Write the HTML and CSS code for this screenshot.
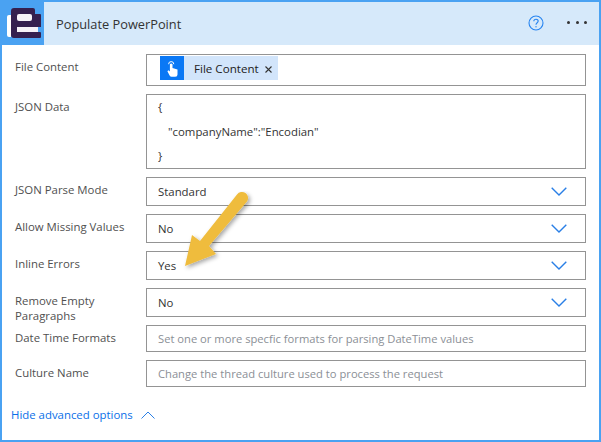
FILE: index.html
```html
<!DOCTYPE html>
<html lang="en">
<head>
<meta charset="utf-8">
<title>Populate PowerPoint</title>
<link rel="stylesheet" href="styles.css">
</head>
<body>
<div class="card">
  <header class="head">
    <div class="logo">
      <svg width="34" height="30" viewBox="0 0 34 30">
        <path d="M0 9Q0 7 2 7H4V29H2Q0 29 0 27Z" fill="#fff"/>
        <path d="M4 3Q4 0 7 0H26Q28 0 28 2V6H33Q34 6 34 7V19H31V24H33Q34 24 34 25V29Q34 30 33 30H7Q4 30 4 27Z" fill="#35204f"/>
        <rect x="10" y="6" width="15" height="7" rx="2" fill="#f6f3f8"/>
        <rect x="10" y="19" width="21" height="5" fill="#f6f3f8"/>
      </svg>
    </div>
    <div class="title">Populate PowerPoint</div>
    <svg class="help" width="16" height="16" viewBox="0 0 16 16">
      <circle cx="8" cy="8" r="7" fill="none" stroke="#2684f0" stroke-width="1.1"/>
      <path d="M5.8 6.2C5.9 3.6 10.2 3.6 10.2 6.1C10.2 7.8 8 7.8 8 9.8" fill="none" stroke="#2684f0" stroke-width="1.1"/>
      <circle cx="8" cy="11.8" r=".7" fill="#2684f0"/>
    </svg>
    <div class="dots"><i></i><i></i><i></i></div>
  </header>
  <div class="form">
    <div class="row">
      <label class="lab">File Content</label>
      <div class="box file">
        <span class="chip">
          <span class="chip-ic">
            <svg width="11" height="17" viewBox="0 0 11 17">
              <path d="M1.6 4.2A2.6 2.6 0 0 1 6.8 4.2" fill="none" stroke="#fff" stroke-width="1"/>
              <path d="M2.9 4.2Q4.2 2.8 5.5 4.2V8L10.5 9.4V14.5Q10.5 16.8 8.2 16.8H4.5Q3.3 16.8 2.6 15.6L.4 11.2L1.4 10.2L2.9 11.4Z" fill="#fff"/>
            </svg>
          </span>
          <span class="chip-t">File Content</span>
          <svg class="chip-x" width="7" height="7" viewBox="0 0 7 7"><path d="M.5.5L6.5 6.5M6.5.5L.5 6.5" stroke="#333" stroke-width="1.1"/></svg>
        </span>
      </div>
    </div>
    <div class="row">
      <label class="lab">JSON Data</label>
      <div class="box json">
        <div>{</div>
        <div class="ind">"companyName":"Encodian"</div>
        <div>}</div>
      </div>
    </div>
    <div class="row"><label class="lab">JSON Parse Mode</label><div class="box sel"><span>Standard</span><svg class="chev" width="16" height="9" viewBox="0 0 16 9"><path d="M.7.7L8 8L15.3.7" fill="none" stroke="#2a7fe6" stroke-width="1.4"/></svg></div></div>
    <div class="row"><label class="lab">Allow Missing Values</label><div class="box sel"><span>No</span><svg class="chev" width="16" height="9" viewBox="0 0 16 9"><path d="M.7.7L8 8L15.3.7" fill="none" stroke="#2a7fe6" stroke-width="1.4"/></svg></div></div>
    <div class="row"><label class="lab">Inline Errors</label><div class="box sel"><span>Yes</span><svg class="chev" width="16" height="9" viewBox="0 0 16 9"><path d="M.7.7L8 8L15.3.7" fill="none" stroke="#2a7fe6" stroke-width="1.4"/></svg></div></div>
    <div class="row"><label class="lab">Remove Empty Paragraphs</label><div class="box sel"><span>No</span><svg class="chev" width="16" height="9" viewBox="0 0 16 9"><path d="M.7.7L8 8L15.3.7" fill="none" stroke="#2a7fe6" stroke-width="1.4"/></svg></div></div>
    <div class="row"><label class="lab">Date Time Formats</label><div class="box ph">Set one or more specfic formats for parsing DateTime values</div></div>
    <div class="row"><label class="lab">Culture Name</label><div class="box ph">Change the thread culture used to process the request</div></div>
  </div>
  <div class="adv">
    <span>Hide advanced options</span>
    <svg width="14" height="8" viewBox="0 0 14 8"><path d="M.5 7.5L7 1L13.5 7.5" fill="none" stroke="#2a7fe6" stroke-width="1"/></svg>
  </div>
  <svg class="arrow" width="90" height="100" viewBox="0 0 90 100">
    <defs><filter id="sh" x="-20%" y="-20%" width="150%" height="150%"><feDropShadow dx="2" dy="2" stdDeviation="2" flood-color="#000" flood-opacity=".35"/></filter></defs>
    <path d="M4 75L11 44L19 50L56 3.5A6.1 6.1 0 0 1 66 10.5L28 55L35 63Z" fill="#efbc3e" filter="url(#sh)"/>
  </svg>
</div>
</body>
</html>
```
FILE: styles.css
```css
* { box-sizing: border-box; }
html, body { margin: 0; padding: 0; }
body { width: 601px; height: 442px; background: #fff; font-family: "Open Sans", "Noto Sans", sans-serif; overflow: hidden; }
.card { position: relative; width: 601px; height: 442px; border: 2px solid #4aa2f2; background: #fff; }
.head { display: flex; align-items: center; height: 43px; background: #d6e9fa; }
.logo { width: 44px; height: 43px; margin-left: -2px; margin-right: 10px; flex: none; background: #4aa2f2; display: flex; align-items: flex-start; padding: 6px 0 0 7px; }
.title { flex: 1; font-size: 12.8px; color: #333; padding-left: 2px; }
.help { margin-right: 23px; margin-top: -2px; }
.dots { display: flex; gap: 5.5px; margin-right: 12px; margin-top: -2px; }
.dots i { width: 3px; height: 3px; border-radius: 50%; background: #333; }
.form { display: flex; flex-direction: column; gap: 8px; padding: 9px 13px 0 13px; }
.row { display: flex; align-items: flex-start; }
.lab { width: 131px; height: 20px; flex: none; font-size: 11.4px; line-height: 15px; color: #505050; padding-top: 5px; padding-right: 20px; }
.box { flex: 1; border: 1px solid #949494; font-size: 11.4px; color: #333; background: #fff; }
.file { height: 32px; padding: 1px 13px; }
.chip { display: inline-flex; align-items: center; height: 24px; background: #d2e5fb; }
.chip-ic { width: 24px; height: 24px; background: #0a78f5; display: flex; align-items: center; justify-content: center; }
.chip-t { margin-left: 10px; color: #222; font-size: 11.6px; }
.chip-x { margin: 2px 6px 0 6px; }
.json { height: 75px; padding: 0 11px; line-height: 24.6px; }
.json .ind { padding-left: 10px; }
.sel { height: 29px; display: flex; align-items: center; justify-content: space-between; padding: 0 18px 0 11px; }
.chev { flex: none; }
.ph { height: 27px; line-height: 25px; padding: 0 11px; color: #8b8f96; font-size: 11.2px; }
.adv { display: flex; align-items: center; gap: 8px; padding: 20px 0 0 9px; font-size: 11.4px; color: #0a6fe8; }
.arrow { position: absolute; left: 179px; top: 189px; }
```
